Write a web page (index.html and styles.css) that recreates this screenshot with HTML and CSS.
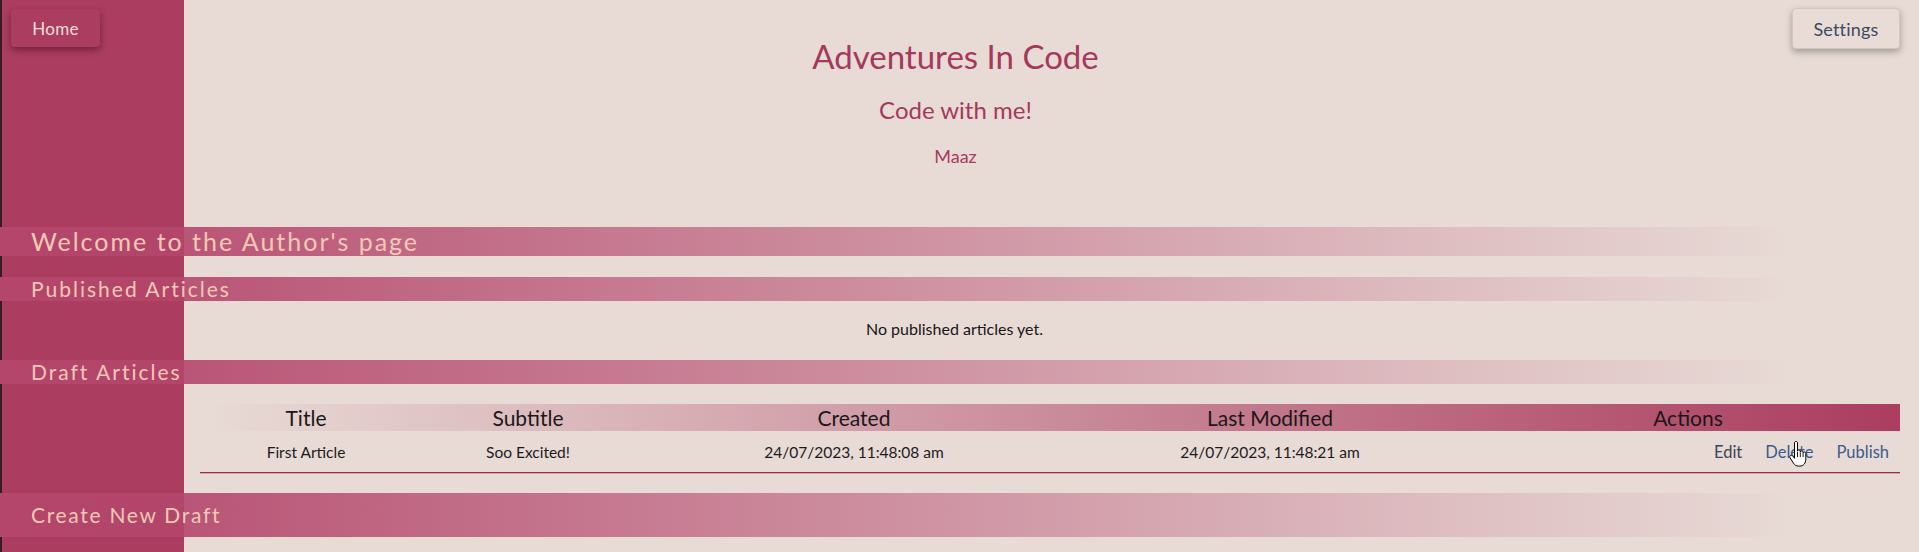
FILE: index.html
```html
<!DOCTYPE html>
<html lang="en">
<head>
<meta charset="utf-8">
<title>Adventures In Code - Author</title>
<link rel="stylesheet" href="styles.css">
</head>
<body>
  <header class="masthead">
    <button class="btn btn-home">Home</button>
    <div class="brand">
      <h1 class="brand-title">Adventures In Code</h1>
      <h2 class="brand-sub">Code with me!</h2>
      <p class="brand-author">Maaz</p>
    </div>
    <button class="btn btn-settings">Settings</button>
  </header>

  <main class="page">
    <h2 class="band band-lg">Welcome to the Author's page</h2>

    <h3 class="band band-sm">Published Articles</h3>
    <p class="empty">No published articles yet.</p>

    <h3 class="band band-sm band-draft">Draft Articles</h3>
    <table class="drafts">
      <colgroup>
        <col class="c-title"><col class="c-sub"><col class="c-created"><col class="c-mod"><col class="c-act">
      </colgroup>
      <thead>
        <tr>
          <th>Title</th>
          <th>Subtitle</th>
          <th>Created</th>
          <th>Last Modified</th>
          <th>Actions</th>
        </tr>
      </thead>
      <tbody>
        <tr>
          <td>First Article</td>
          <td>Soo Excited!</td>
          <td>24/07/2023, 11:48:08 am</td>
          <td>24/07/2023, 11:48:21 am</td>
          <td class="actions">
            <a class="act act-edit" href="#">Edit</a>
            <a class="act act-link" href="#">Delete</a>
            <a class="act act-link" href="#">Publish</a>
          </td>
        </tr>
      </tbody>
    </table>

    <h3 class="band band-create">Create New Draft</h3>
  </main>

  <svg class="cursor" width="18" height="26" viewBox="0 0 18 26" aria-hidden="true">
    <path d="M5.5 2c0-1 .7-1.6 1.5-1.6S8.5 1 8.5 2v8.2c0-.9.6-1.4 1.4-1.4s1.4.5 1.4 1.4v1c0-.9.6-1.4 1.4-1.4s1.4.5 1.4 1.4v1.1c0-.8.6-1.3 1.300-1.3s1.4.6 1.4 1.4v5.8c0 3.9-2.4 6.9-6.1 6.9H9.6c-2.4 0-3.9-1.1-5.2-3L1.1 16.9c-.6-.9-.4-1.9.4-2.4.8-.5 1.7-.3 2.3.5l1.7 2.3z" fill="#fff" stroke="#000" stroke-width="1" stroke-linejoin="round"/>
    <path d="M8.5 11v5M11.3 11.5v4.5M14.1 12.5v3.5" stroke="#000" stroke-width="0.9" fill="none"/>
  </svg>
</body>
</html>
```

FILE: styles.css
```css
html, body {
  margin: 0;
  padding: 0;
}

body {
  position: relative;
  width: 1919px;
  height: 552px;
  overflow: hidden;
  font-family: "Lato", "Open Sans", sans-serif;
  color: #1f1a1c;
  background:
    linear-gradient(to right, #3a1a24 0, #3a1a24 2px, #ab3d60 2px, #ab3d60 184px, #e8dbd6 184px);
}

/* ---------- masthead ---------- */
.masthead {
  display: grid;
  grid-template-columns: 1fr auto 1fr;
  align-items: start;
  padding: 8px 19px 0 11px;
}

.btn {
  font-family: "Lato", sans-serif;
  border-radius: 4px;
  cursor: pointer;
}

.btn-home {
  justify-self: start;
  margin-top: 1px;
  width: 89px;
  height: 38px;
  background: #ab3d60;
  color: #eedfdb;
  border: none;
  font-size: 17px;
  font-weight: 400;
  letter-spacing: 0.3px;
  box-shadow: 0 3px 7px rgba(40, 0, 15, 0.45);
}

.btn-settings {
  justify-self: end;
  width: 108px;
  height: 41px;
  background: #e9dcd7;
  color: #3b4a5f;
  border: 1px solid #d3c6c2;
  font-size: 18px;
  font-weight: 400;
  letter-spacing: 0.2px;
  box-shadow: 0 3px 7px rgba(0, 0, 0, 0.3);
}

.brand {
  text-align: center;
  color: #a6385b;
}

.brand-title {
  margin: 28px 0 0;
  font-size: 33px;
  line-height: 40px;
  font-weight: 400;
}

.brand-sub {
  margin: 19px 0 0;
  font-size: 24px;
  line-height: 30px;
  font-weight: 400;
}

.brand-author {
  margin: 19px 0 0;
  font-size: 18px;
  line-height: 24px;
  color: #a83a5e;
}

/* ---------- section bands ---------- */
.page {
  padding-top: 59px;
}

.band {
  margin: 0;
  width: 1800px;
  box-sizing: border-box;
  padding-left: 31px;
  font-weight: 400;
  color: #f3c9b5;
  letter-spacing: 2px;
  background: linear-gradient(to right, rgba(180, 70, 108, 1) 0%, rgba(180, 70, 108, 0) 100%);
}

.band-lg {
  height: 29px;
  line-height: 29px;
  font-size: 25px;
}

.band-sm {
  margin-top: 21px;
  height: 24px;
  line-height: 24px;
  font-size: 21px;
}

.band-create {
  margin-top: 20px;
  height: 44px;
  line-height: 44px;
  font-size: 21px;
  letter-spacing: 1.7px;
}

.empty {
  margin: 18px 10px 0 0;
  text-align: center;
  font-size: 16px;
  line-height: 20px;
  color: #1a1517;
}

.band-draft {
  margin-top: 21px;
}

/* ---------- drafts table ---------- */
.drafts {
  margin: 20px 0 0 200px;
  width: 1700px;
  table-layout: fixed;
  border-collapse: collapse;
}

.c-title { width: 212px; }
.c-sub { width: 232px; }
.c-created { width: 420px; }
.c-mod { width: 412px; }
.c-act { width: 424px; }

.drafts thead tr {
  background: linear-gradient(to right, rgba(171, 61, 96, 0) 0%, rgba(171, 61, 96, 1) 100%);
}

.drafts th {
  height: 27px;
  padding: 0;
  font-size: 21px;
  line-height: 27px;
  font-weight: 400;
  color: #1c1719;
  text-align: center;
}

.drafts tbody tr {
  border-bottom: 1px solid #8e2f4f;
  box-shadow: 0 1px 0 #dc9fb0;
}

.drafts td {
  height: 41px;
  padding: 0;
  font-size: 15.5px;
  text-align: center;
  color: #1e1a1c;
}

.drafts td.actions {
  text-align: right;
  padding-right: 11px;
}

.act {
  text-decoration: none;
  margin-left: 19px;
  font-size: 16.5px;
}

.act-edit {
  color: #3b4657;
}

.act-link {
  color: #3a5b8c;
}

/* ---------- mouse cursor in the capture ---------- */
.cursor {
  position: absolute;
  left: 1789px;
  top: 441px;
}
```
